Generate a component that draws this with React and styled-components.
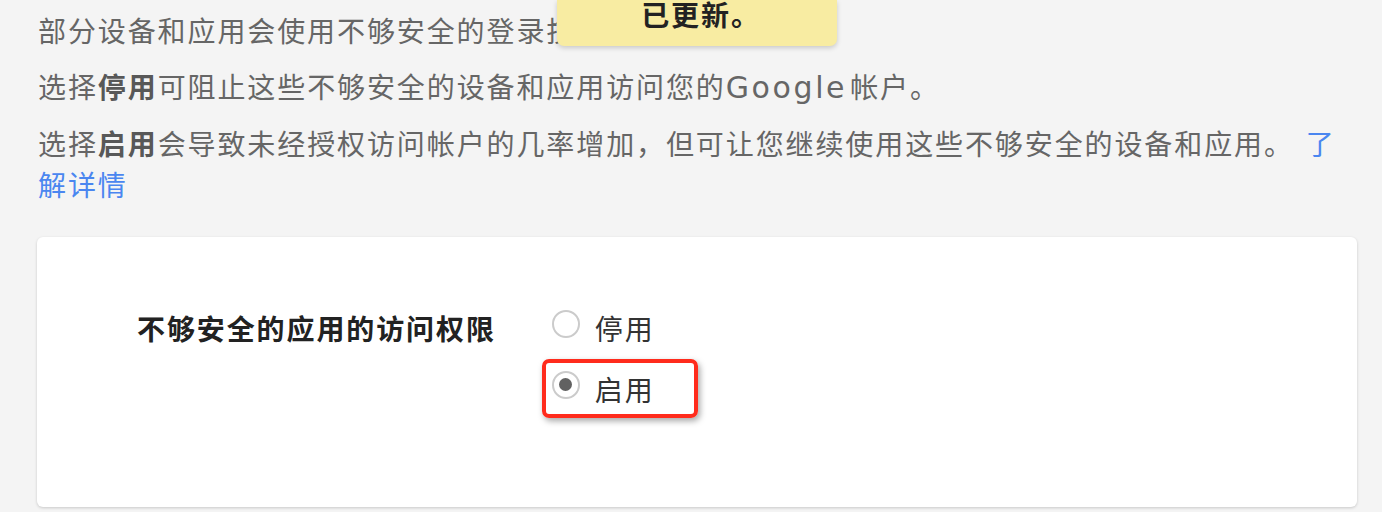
import React from "react";
import styled, { createGlobalStyle } from "styled-components";

const Global = createGlobalStyle`
  html, body {
    margin: 0;
    padding: 0;
    background: #f4f4f4;
  }
  body {
    font-family: "Noto Sans CJK SC", "Noto Sans", sans-serif;
    width: 1382px;
    height: 512px;
    overflow: hidden;
  }
`;

const Page = styled.div`
  position: relative;
  padding: 10px 25px 0 37px;
`;

const Para = styled.p`
  margin: 0 10px 15px 1px;
  font-size: 28px;
  line-height: 41px;
  letter-spacing: 1.9px;
  color: #666666;
`;

const Strong = styled.span`
  font-weight: 700;
  color: #585858;
`;

const Latin = styled.span`
  font-family: "DejaVu Sans", sans-serif;
  font-size: 30px;
  letter-spacing: 2.6px;
  margin-right: 3px;
`;

const Link = styled.a`
  color: #4a86f0;
  text-decoration: none;
  margin-left: 12px;
`;

const Card = styled.section`
  margin-top: 32px;
  height: 270px;
  box-sizing: border-box;
  background: #ffffff;
  border-radius: 6px;
  box-shadow: 0 1px 3px rgba(0, 0, 0, 0.18);
  padding: 68px 0 0 100px;
  display: flex;
  gap: 56px;
  align-items: flex-start;
`;

const FieldLabel = styled.div`
  font-size: 28px;
  line-height: 46px;
  letter-spacing: 1.9px;
  font-weight: 700;
  color: #222;
`;

const Options = styled.div`
  display: flex;
  flex-direction: column;
  gap: 15px;
`;

const Option = styled.label`
  position: relative;
  display: flex;
  align-items: center;
  gap: 15px;
  height: 46px;
  font-size: 28px;
  letter-spacing: 1.9px;
  color: #333;
`;

const Circle = styled.span`
  width: 28px;
  height: 28px;
  box-sizing: border-box;
  border-radius: 50%;
  border: 2px solid #cbcbcb;
  background: #fff;
  display: flex;
  align-items: center;
  justify-content: center;
  margin-top: -9px;
  &::after {
    content: "";
    width: 13px;
    height: 13px;
    border-radius: 50%;
    background: ${(p) => (p.$checked ? "#616161" : "transparent")};
  }
`;

const Highlight = styled.span`
  position: absolute;
  left: -10px;
  top: -7px;
  width: 156px;
  height: 59px;
  box-sizing: border-box;
  border: 4px solid #ff2b1c;
  border-radius: 7px;
  box-shadow: 2px 3px 6px rgba(0, 0, 0, 0.35);
  pointer-events: none;
`;

const Toast = styled.div`
  position: absolute;
  top: 0;
  left: 557px;
  width: 280px;
  height: 46px;
  box-sizing: border-box;
  padding: 0 0 17px 8px;
  background: #f8eca2;
  border-radius: 0 0 7px 7px;
  box-shadow: 0 2px 5px rgba(0, 0, 0, 0.18);
  text-align: center;
  font-size: 28px;
  line-height: 29px;
  letter-spacing: 1.9px;
  font-weight: 700;
  color: #222;
`;

export default function App() {
  return (
    <>
      <Global />
      <Page>
        <Para>部分设备和应用会使用不够安全的登录技术。</Para>
        <Para>
          选择<Strong>停用</Strong>可阻止这些不够安全的设备和应用访问您的
          <Latin>Google</Latin>帐户。
        </Para>
        <Para>
          选择<Strong>启用</Strong>
          会导致未经授权访问帐户的几率增加，但可让您继续使用这些不够安全的设备和应用。
          <Link href="#">了解详情</Link>
        </Para>
        <Card>
          <FieldLabel>不够安全的应用的访问权限</FieldLabel>
          <Options>
            <Option>
              <Circle />
              停用
            </Option>
            <Option>
              <Circle $checked />
              启用
              <Highlight />
            </Option>
          </Options>
        </Card>
        <Toast>已更新。</Toast>
      </Page>
    </>
  );
}
